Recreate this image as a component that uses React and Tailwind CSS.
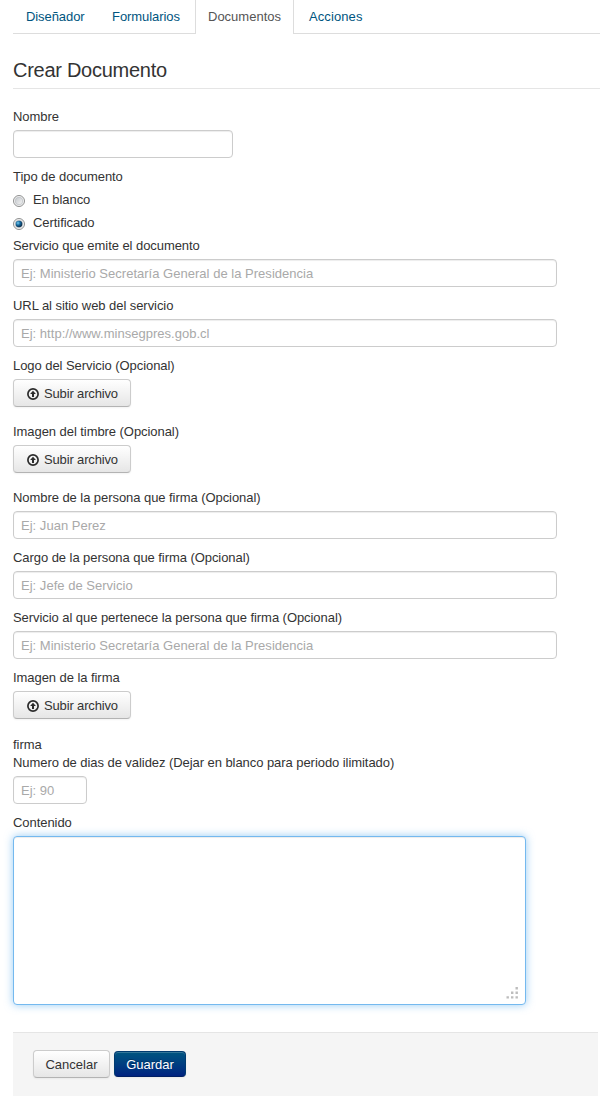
const tabs = [
  { label: 'Diseñador', width: 'w-[84px]', tracking: 'tracking-[-0.08px]' },
  { label: 'Formularios', width: 'w-[94px]', tracking: 'tracking-[-0.06px]' },
  { label: 'Documentos', width: 'w-[99px]', tracking: 'tracking-normal', active: true },
  { label: 'Acciones', width: 'w-[80px]', tracking: 'tracking-[0.1px]' },
];

function Tab({ label, width, tracking, active }) {
  return (
    <a
      href="#"
      className={`${width} ${tracking} h-[34px] shrink-0 border-x pl-3 pt-[8px] whitespace-nowrap ${
        active
          ? 'border-[#dddddd] bg-white text-[#555555]'
          : 'border-transparent text-[#005580]'
      }`}
    >
      {label}
    </a>
  );
}

const labelText = 'block h-[18px] pt-px whitespace-nowrap tracking-[-0.06px]';

function Field({ label, placeholder, width = 'w-[544px]' }) {
  return (
    <label className="mb-[9px] block">
      <span className={`${labelText} mb-[5px]`}>{label}</span>
      <input
        type="text"
        placeholder={placeholder}
        className={`${width} block h-7 rounded-[4px] border border-[#cccccc] bg-white px-[7px] text-[13px] tracking-[0.02px] text-[#555555] shadow-[inset_0_1px_1px_rgba(0,0,0,0.075)] outline-none placeholder:text-[#a9a9a9]`}
      />
    </label>
  );
}

function UploadIcon() {
  return (
    <svg width="12" height="12" viewBox="0 0 12 12" fill="none" className="mt-px shrink-0">
      <circle cx="6" cy="6" r="5.1" stroke="#2b2b2b" strokeWidth="1.7" />
      <path d="M6 2.8L8.9 6H7V9H5V6H3.1Z" fill="#2b2b2b" />
    </svg>
  );
}

const grayButton =
  'flex h-7 items-center rounded-[4px] border border-[#cccccc] border-b-[#b3b3b3] bg-linear-to-b from-white to-[#e6e6e6] text-[#333333] shadow-[inset_0_1px_0_rgba(255,255,255,0.2),0_1px_2px_rgba(0,0,0,0.05)]';

function Upload({ label, gap = 'mb-[15px]' }) {
  return (
    <div className={gap}>
      <div className={`${labelText} mb-[5px]`}>{label}</div>
      <button
        type="button"
        className={`${grayButton} w-[118px] gap-[5px] pl-[13px] tracking-[-0.15px] whitespace-nowrap`}
      >
        <UploadIcon />
        <span className="pt-[2px]">Subir archivo</span>
      </button>
    </div>
  );
}

function Radio({ label, checked }) {
  return (
    <div className="mb-[5px] flex h-[18px]">
      <svg width="12" height="12" viewBox="0 0 12 12" className="mt-[5px] mr-2 shrink-0">
        <defs>
          <linearGradient id="radioFace" x1="0" y1="0" x2="1" y2="1">
            <stop offset="0" stopColor="#c4c8cc" />
            <stop offset="1" stopColor="#f5f5f5" />
          </linearGradient>
          <radialGradient id="radioDot" cx="0.35" cy="0.35" r="0.65">
            <stop offset="0" stopColor="#75cdf3" />
            <stop offset="0.5" stopColor="#17699d" />
            <stop offset="1" stopColor="#0c304f" />
          </radialGradient>
        </defs>
        <circle cx="6" cy="6" r="5.5" fill="#f5f5f5" stroke="#8e8f8f" strokeWidth="1" />
        <circle cx="6" cy="6" r="3.8" fill="url(#radioFace)" stroke="#b8bcc0" strokeWidth="0.7" />
        {checked && <circle cx="6" cy="6" r="3.3" fill="url(#radioDot)" />}
      </svg>
      <span className={labelText}>{label}</span>
    </div>
  );
}

export default function App() {
  return (
    <div className="h-[1113px] w-[600px] overflow-hidden bg-white pl-[13px] font-['Liberation_Sans',Arial,sans-serif] text-[13px] leading-[18px] text-[#333333]">
      <nav className="flex h-[34px] gap-[2px] bg-[linear-gradient(#dddddd,#dddddd)] bg-[length:100%_1px] bg-bottom bg-no-repeat">
        {tabs.map((tab) => (
          <Tab key={tab.label} {...tab} />
        ))}
      </nav>

      <h1 className="mt-[18px] mb-[18px] h-[37px] border-b border-[#e5e5e5] text-[20px] leading-[36px] tracking-[-0.27px]">
        Crear Documento
      </h1>

      <form>
        <Field label="Nombre" width="w-[220px]" />
        <div className={`${labelText} mb-[5px]`}>Tipo de documento</div>
        <Radio label="En blanco" />
        <Radio label="Certificado" checked />
        <Field label="Servicio que emite el documento" placeholder="Ej: Ministerio Secretaría General de la Presidencia" />
        <Field label="URL al sitio web del servicio" placeholder="Ej: http://www.minsegpres.gob.cl" />
        <Upload label="Logo del Servicio (Opcional)" />
        <Upload label="Imagen del timbre (Opcional)" />
        <Field label="Nombre de la persona que firma (Opcional)" placeholder="Ej: Juan Perez" />
        <Field label="Cargo de la persona que firma (Opcional)" placeholder="Ej: Jefe de Servicio" />
        <Field
          label="Servicio al que pertenece la persona que firma (Opcional)"
          placeholder="Ej: Ministerio Secretaría General de la Presidencia"
        />
        <Upload label="Imagen de la firma" gap="mb-[16px]" />
        <div className={labelText}>firma</div>
        <Field
          label="Numero de dias de validez (Dejar en blanco para periodo ilimitado)"
          placeholder="Ej: 90"
          width="w-[74px]"
        />
        <div className={`${labelText} mb-[5px]`}>Contenido</div>
        <div className="relative h-[169px] w-[513px]">
          <textarea className="block h-full w-full resize-none rounded-[4px] border border-[#74b9ef] bg-white outline-none shadow-[inset_0_1px_1px_rgba(0,0,0,0.075),0_0_8px_rgba(82,168,236,0.6)]" />
          <svg width="12" height="12" viewBox="0 0 12 12" fill="#bdbdbd" className="absolute right-[8px] bottom-[6px]">
            <path d="M9.5 0h2.4v2.4H9.5zM5 4.6h2.4V7H5zM9.5 4.6h2.4V7H9.5zM.5 9.2h2.4v2.4H.5zM5 9.2h2.4v2.4H5zM9.5 9.2h2.4v2.4H9.5z" />
          </svg>
        </div>

        <div className="mt-[27px] flex h-[64px] w-[585px] gap-1 border-t border-[#e5e5e5] bg-[#f5f5f5] pt-[17px] pl-5">
          <button type="button" className={`${grayButton} w-[77px] justify-center pt-[2px]`}>
            Cancelar
          </button>
          <button
            type="button"
            className="mt-px flex h-[26px] w-[72px] items-center justify-center rounded-[4px] border border-[#003b70] border-b-[#001f63] bg-linear-to-b from-[#005580] to-[#002280] pt-[2px] text-white shadow-[inset_0_1px_0_rgba(255,255,255,0.2),0_1px_2px_rgba(0,0,0,0.05)] [text-shadow:0_-1px_0_rgba(0,0,0,0.25)]"
          >
            Guardar
          </button>
        </div>
      </form>
    </div>
  );
}
